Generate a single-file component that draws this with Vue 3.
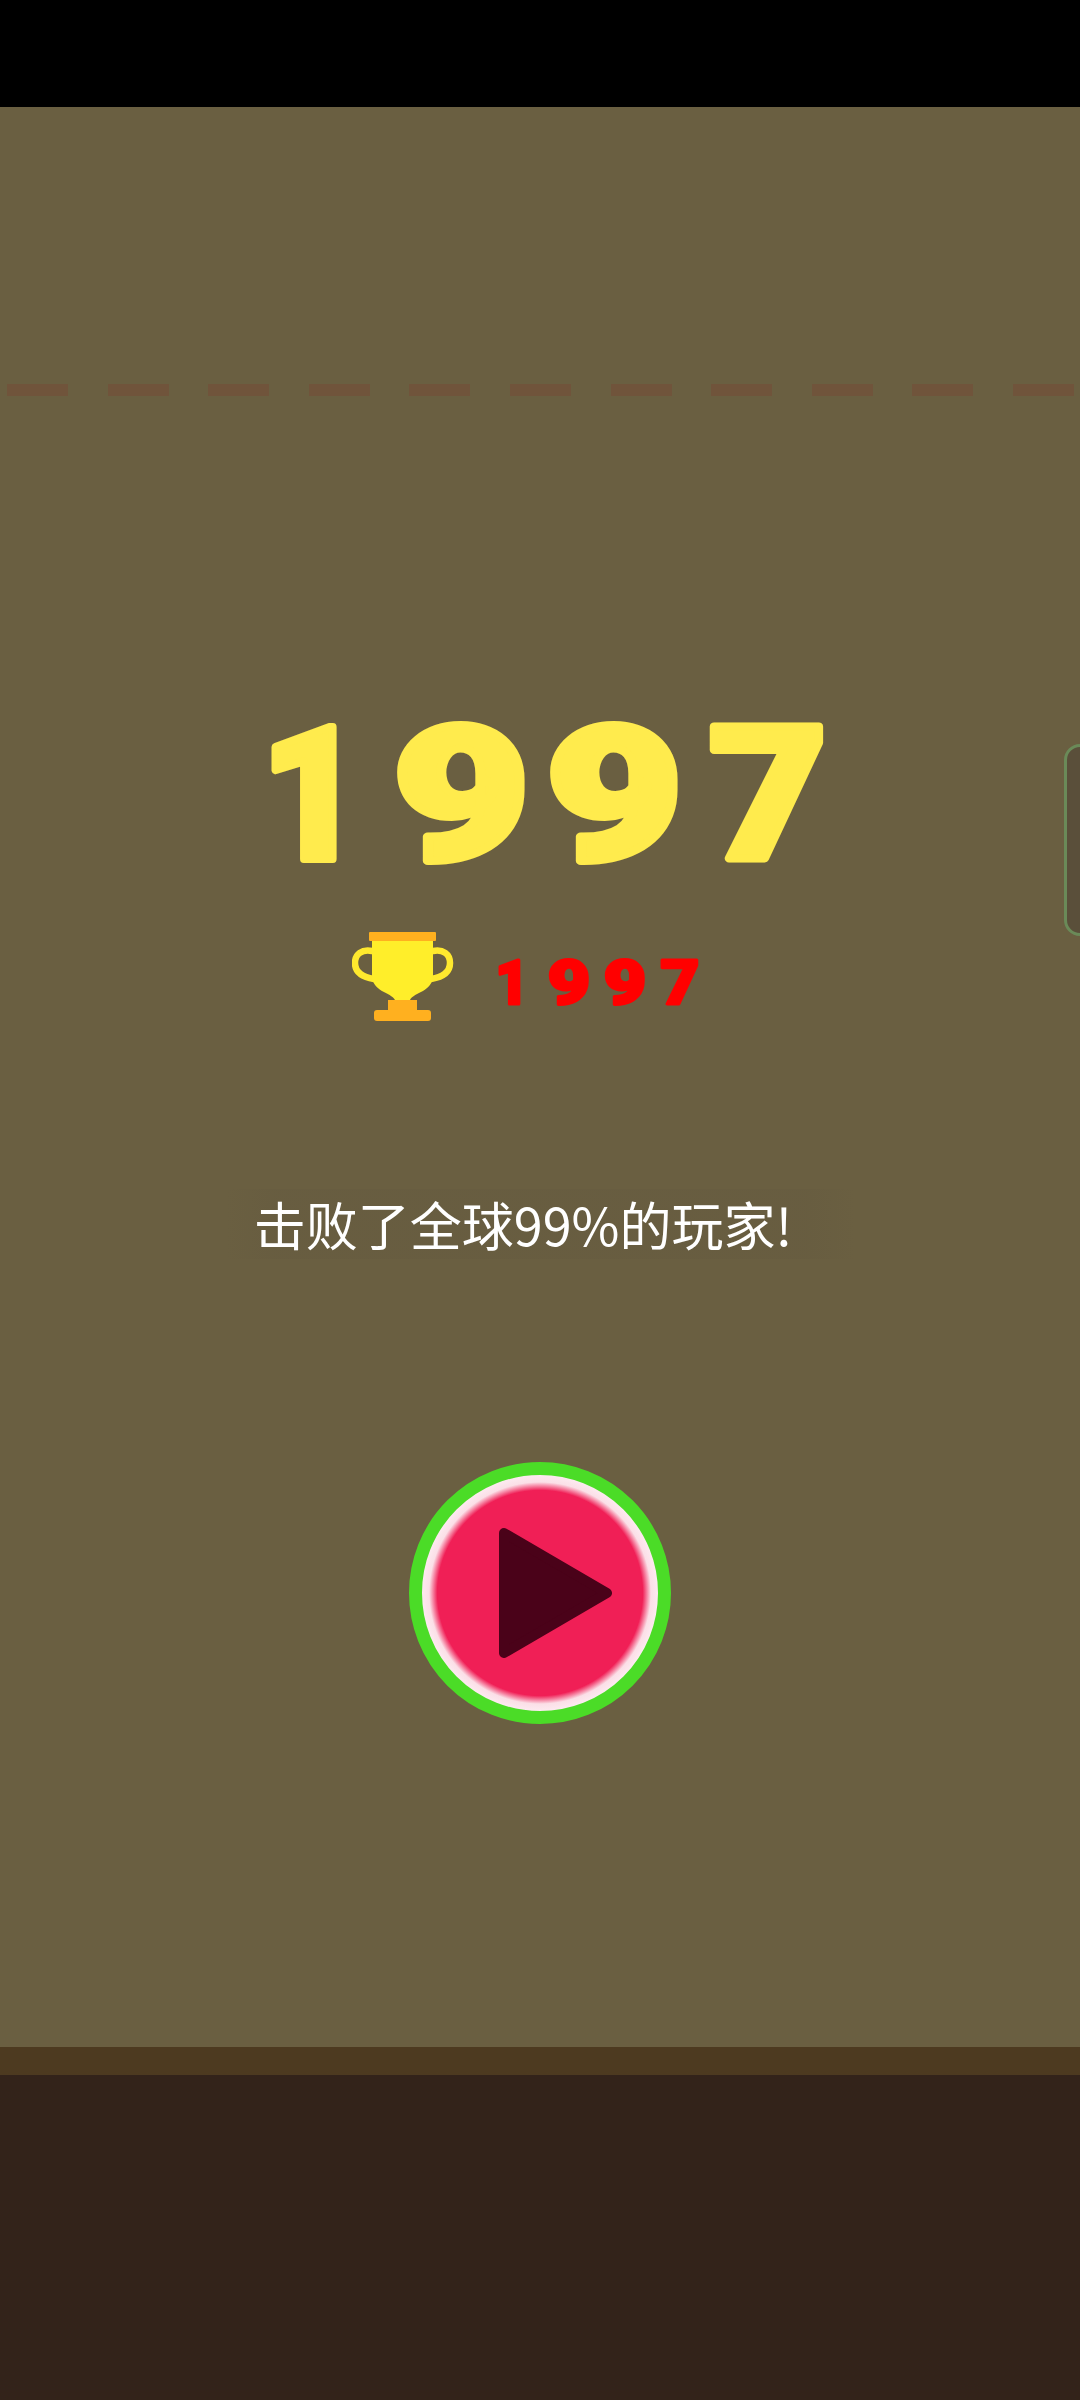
<script setup>
const dashes = Array.from({ length: 11 })
const bigDigits = [
  { ch: '1', x: 152, sx: 0.945 },
  { ch: '9', x: 301.5, sx: 1.27 },
  { ch: '9', x: 454.5, sx: 1.27 },
  { ch: '7', x: 608, sx: 1.096 },
]
const smallDigits = [
  { ch: '1', x: 22, sx: 0.95 },
  { ch: '9', x: 79, sx: 1.2 },
  { ch: '9', x: 135, sx: 1.2 },
  { ch: '7', x: 190, sx: 1.1 },
]
</script>

<template>
  <div class="page">
    <div class="statusbar"></div>
    <main class="game">
      <div class="deadline">
        <span v-for="(d, i) in dashes" :key="i" class="dash"></span>
      </div>
      <svg class="score" viewBox="0 0 760 226" width="760" height="226">
        <text
          v-for="(d, i) in bigDigits"
          :key="i"
          class="score-digit"
          text-anchor="middle"
          :transform="`translate(${d.x} 171) scale(${d.sx} 1)`"
        >{{ d.ch }}</text>
      </svg>
      <div class="best">
        <svg class="trophy" viewBox="0 0 102 90" width="102" height="90">
          <path d="M20 19C10 17 3 22 3 31C3 40 10 45 22 47" fill="none" stroke="#ffe92e" stroke-width="6.500" stroke-linecap="round" />
          <path d="M81 19C91 17 98 22 98 31C98 40 91 45 79 47" fill="none" stroke="#ffe92e" stroke-width="6.500" stroke-linecap="round" />
          <path d="M20 8H81V43C81 60 62 60 58 68V70H43V68C39 60 20 60 20 43Z" fill="#ffee2a" />
          <rect x="17" y="0" width="67" height="9" rx="1" fill="#ffb01f" />
          <rect x="36" y="68" width="29" height="12" fill="#ffb01f" />
          <rect x="22" y="78" width="57" height="11" rx="3" fill="#ffb01f" />
        </svg>
        <svg class="best-score" viewBox="0 0 238 90" width="238" height="90">
          <text
            v-for="(d, i) in smallDigits"
            :key="i"
            class="best-digit"
            text-anchor="middle"
            :transform="`translate(${d.x} 72) scale(${d.sx} 1)`"
          >{{ d.ch }}</text>
        </svg>
      </div>
      <div class="message">击败了全球99%的玩家!</div>
      <div class="play">
        <svg class="play-icon" viewBox="0 0 113 130" width="113" height="130">
          <path d="M5 5L108 65L5 125Z" fill="#4a0219" stroke="#4a0219" stroke-width="10" stroke-linejoin="round" />
        </svg>
      </div>
      <div class="side-tab"></div>
    </main>
    <div class="ground-top"></div>
    <div class="ground"></div>
  </div>
</template>

<style>
html, body { margin: 0; background: #000; }
</style>

<style scoped>
.page {
  width: 1080px;
  height: 2400px;
  display: flex;
  flex-direction: column;
  overflow: hidden;
  font-family: "Noto Sans CJK SC", Roboto, sans-serif;
}
.statusbar { height: 107px; background: #000; flex: none; }
.game {
  position: relative;
  flex: 1;
  background: #6a5f41;
  display: flex;
  flex-direction: column;
  align-items: center;
  overflow: hidden;
}
.deadline {
  align-self: stretch;
  display: flex;
  gap: 39.6px;
  padding-left: 7px;
  margin-top: 277px;
}
.dash { width: 61px; height: 12px; background: #70543b; flex: none; }
.score {
  display: block;
  margin-top: 292px;
  flex: none;
}
.score-digit {
  font-family: Roboto, "DejaVu Sans", sans-serif;
  font-weight: 900;
  font-size: 186px;
  fill: #ffeb4d;
  stroke: #ffeb4d;
  stroke-width: 8px;
  stroke-linejoin: round;
}
.best {
  margin-top: 18px;
  display: flex;
  align-items: center;
  height: 90px;
  flex: none;
}
.trophy { display: block; margin-right: 36px; }
.best-score { display: block; }
.best-digit {
  font-family: Roboto, "DejaVu Sans", sans-serif;
  font-weight: 900;
  font-size: 61px;
  fill: #ff0000;
  stroke: #ff0000;
  stroke-width: 3px;
  stroke-linejoin: round;
}
.message {
  margin-top: 167px;
  width: 631px;
  height: 70px;
  box-sizing: border-box;
  padding-right: 34px;
  line-height: 70px;
  text-align: center;
  font-size: 52px;
  color: #fff;
  white-space: nowrap;
  background: linear-gradient(90deg, rgba(90, 80, 60, 0) 0, rgba(90, 80, 60, .14) 8%, rgba(90, 80, 60, .14) 92%, rgba(90, 80, 60, 0) 100%);
}
.play {
  margin-top: 203px;
  width: 236px;
  height: 236px;
  flex: none;
  border: 13px solid #4bdc27;
  border-radius: 50%;
  background: radial-gradient(circle closest-side, #f01f56 0, #f01f56 87%, #fbdfe7 94%, #fdeaf0 100%);
  display: flex;
  align-items: center;
  justify-content: center;
}
.play-icon { display: block; margin-left: 30px; }
.side-tab {
  position: absolute;
  right: -30px;
  top: 637px;
  width: 40px;
  height: 186px;
  border: 3px solid #6a8a58;
  border-radius: 16px;
  background: #5a4f3a;
}
.ground-top { height: 28px; background: #4d3a20; flex: none; }
.ground { height: 325px; background: #33231a; flex: none; }
</style>
